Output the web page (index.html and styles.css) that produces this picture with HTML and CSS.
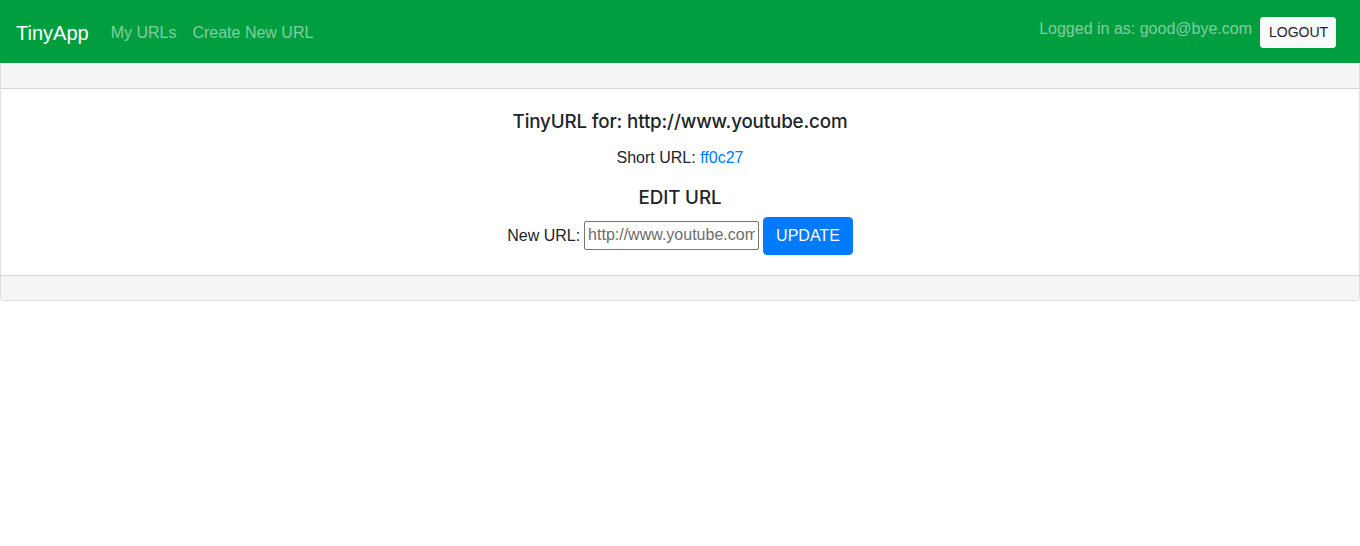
FILE: index.html
```html
<!DOCTYPE html>
<html>
<head>
<meta charset="utf-8">
<title>TinyApp</title>
<link rel="stylesheet" href="styles.css">
</head>
<body>
<nav class="navbar">
  <a class="brand" href="#">TinyApp</a>
  <div class="nav-links">
    <a class="nav-link" href="#">My URLs</a>
    <a class="nav-link" href="#">Create New URL</a>
  </div>
  <div class="nav-right">
    <span class="logged">Logged in as: good@bye.com</span>
    <button class="btn-logout">LOGOUT</button>
  </div>
</nav>
<div class="card">
  <div class="card-header"></div>
  <div class="card-body">
    <h5 class="card-title">TinyURL for: http://www.youtube.com</h5>
    <p class="card-text">Short URL: <a class="link" href="#">ff0c27</a></p>
    <h5 class="edit-title">EDIT URL</h5>
    <form class="edit-form">
      <label class="label" for="longURL">New URL:</label>
      <input class="input" id="longURL" type="text" placeholder="http://www.youtube.com">
      <button class="btn-update" type="button">UPDATE</button>
    </form>
  </div>
  <div class="card-footer"></div>
</div>
</body>
</html>
```

FILE: styles.css
```css
* { box-sizing: border-box; }
body {
  margin: 0;
  font-family: "Liberation Sans", Arial, sans-serif;
  font-size: 16px;
  line-height: 1.5;
  color: #212529;
  background: #fff;
}
.navbar {
  display: flex;
  align-items: center;
  height: 63px;
  padding: 0 16px;
  background: #009e3f;
}
.brand {
  font-size: 20px;
  color: #fff;
  text-decoration: none;
  margin-right: 14px;
  line-height: 30px;
  position: relative;
  top: 1px;
}
.nav-links { display: flex; }
.nav-link {
  color: rgba(255,255,255,.5);
  text-decoration: none;
  padding: 8px;
  position: relative;
  top: 1px;
}
.nav-right {
  margin-left: auto;
  display: flex;
  align-items: center;
  margin-right: 8px;
}
.logged {
  color: rgba(255,255,255,.5);
  margin-right: 8px;
  position: relative;
  top: -3px;
}
.btn-logout {
  font-family: inherit;
  font-size: 14px;
  line-height: 21px;
  padding: 4px 8px;
  height: 31px;
  width: 76px;
  border: 1px solid #f8f9fa;
  background: #f8f9fa;
  color: #212529;
  border-radius: 3px;
  position: relative;
  top: 1px;
}
.card {
  border: 1px solid rgba(0,0,0,.125);
  border-top: 0;
  border-radius: 0 0 4px 4px;
}
.card-header {
  height: 26px;
  background: #f5f5f5;
  border-bottom: 1px solid rgba(0,0,0,.125);
}
.card-body {
  padding: 20px;
  text-align: center;
  height: 186px;
}
.card-title, .edit-title {
  font-family: Inter, "Liberation Sans", sans-serif;
  font-size: 18.8px;
  font-weight: 500;
  line-height: 24px;
  margin: 0 0 12px;
  letter-spacing: -0.15px;
  position: relative;
  top: 1px;
}
.edit-title { margin-bottom: 8px; }
.card-text { margin: 0 0 16px; position: relative; top: 1px; }
.link { color: #007bff; text-decoration: none; }
.edit-form {
  display: flex;
  justify-content: center;
  align-items: center;
  gap: 4px;
  height: 38px;
}
.label { margin-right: 0; }
.input {
  width: 175px;
  height: 29px;
  font-family: inherit;
  font-size: 16px;
  padding: 1px 3px;
  border: 1px solid #767676;
  border-radius: 2px;
  color: #212529;
  position: relative;
  top: -1px;
}
.input::placeholder { color: #6d6d6d; }
.btn-update {
  font-family: inherit;
  font-size: 16px;
  line-height: 24px;
  height: 38px;
  padding: 6px 12px;
  background: #007bff;
  color: #fff;
  border: 1px solid #007bff;
  border-radius: 4px;
}
.card-footer {
  height: 25px;
  background: #f5f5f5;
  border-top: 1px solid rgba(0,0,0,.125);
  border-radius: 0 0 3px 3px;
}
```
